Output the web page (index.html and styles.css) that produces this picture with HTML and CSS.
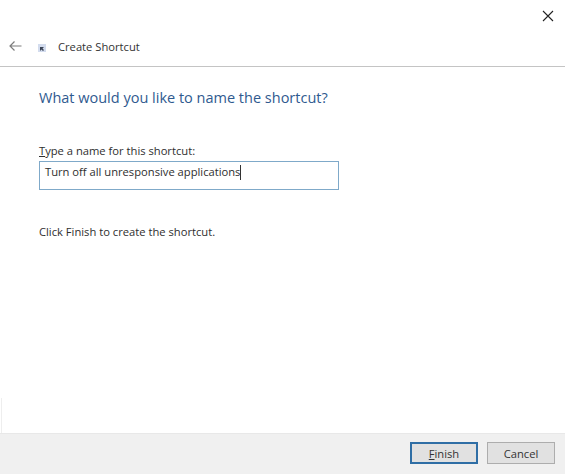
FILE: index.html
```html
<!doctype html>
<html>
<head>
    <meta charset="utf-8">
    <title>Create Shortcut</title>
    <link rel="stylesheet" href="styles.css">
</head>

<body>
<div id="wizard">
    <div class="top">
        <svg class="close" width="12" height="12" viewBox="0 0 12 12"><path d="M1 1L11 11M11 1L1 11" stroke="#222" stroke-width="1.1" fill="none"/></svg>
    </div>
    <div class="head">
        <svg class="back" width="13" height="12" viewBox="0 0 13 12"><path d="M12.5 6H1M5.5 1.5L1 6L5.5 10.5" stroke="#7d7d7d" stroke-width="1.2" fill="none"/></svg>
        <svg class="icon" width="8" height="8" viewBox="0 0 8 8"><rect width="8" height="8" fill="#d3dcee"/><path d="M2 7V3H6L4.5 4.5L6 6L5 7L3.5 5.5Z" fill="#3c4658"/></svg>
        <span class="title">Create Shortcut</span>
    </div>
    <div class="main">
        <h1>What would you like to name the shortcut?</h1>
        <label><u>T</u>ype a name for this shortcut:</label>
        <div class="field">Turn off all unresponsive applications<span class="caret"></span></div>
        <p>Click Finish to create the shortcut.</p>
    </div>
    <div class="foot">
        <button class="on"><u>F</u>inish</button>
        <button>Cancel</button>
    </div>
</div>
</body>
</html>
```

FILE: styles.css
```css
*{
    margin:0;
    padding:0;
    box-sizing:border-box;
}
body{
    background:#fff;
    font-family:"Open Sans","Noto Sans",sans-serif;
    font-size:11.2px;
    color:#2e2e2e;
}
#wizard{
    width:565px;
    height:474px;
    display:flex;
    flex-direction:column;
}

.top{
    height:30px;
    display:flex;
    justify-content:flex-end;
    padding:10px 11px 0 0;
}

.head{
    height:37px;
    display:flex;
    align-items:center;
    border-bottom:#c4c4c4 1px solid;
    padding:0 0 4px 9px;
}
.back{
    margin-right:16px;
}
.icon{
    margin:4px 12px 0 0;
}
.title{
    color:#333;
}

.main{
    flex:1;
    position:relative;
    padding:21px 0 0 39px;
}
.main::before{
    content:"";
    position:absolute;
    left:1px;
    bottom:0;
    width:1px;
    height:35px;
    background:#eee;
}
h1{
    font-size:14.5px;
    font-weight:400;
    line-height:20px;
    color:#2f5a8f;
}
label{
    display:block;
    margin-top:35px;
    line-height:16px;
}
.field{
    width:300px;
    height:29px;
    margin-top:2px;
    border:#7fa9c9 1px solid;
    padding:0 0 7px 5px;
    line-height:20px;
    display:flex;
    align-items:center;
}
.caret{
    width:1px;
    height:15px;
    background:#333;
}
p{
    margin-top:34px;
    line-height:16px;
}

.foot{
    height:41px;
    background:#f0f0f0;
    border-top:#e8e8e8 1px solid;
    display:flex;
    justify-content:flex-end;
    gap:9px;
    padding:8px 10px 0 0;
}
button{
    width:68px;
    height:22px;
    background:#e1e1e1;
    border:#adadad 1px solid;
    font:inherit;
    color:#333;
}
button.on{
    border:#2f6ea5 2px solid;
}
```
